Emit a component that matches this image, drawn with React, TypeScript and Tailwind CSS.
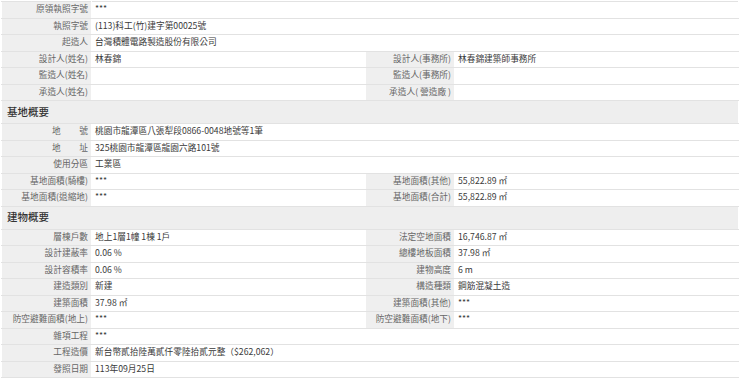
type Cell = { label: React.ReactNode; value?: React.ReactNode };
type Row = { left: Cell; right?: Cell } | { section: string };

const rows: Row[] = [
  { left: { label: "原領執照字號", value: "***" } },
  { left: { label: "執照字號", value: "(113)科工(竹)建字第00025號" } },
  { left: { label: "起造人", value: "台灣積體電路製造股份有限公司" } },
  { left: { label: "設計人(姓名)", value: "林春錦" }, right: { label: "設計人(事務所)", value: "林春錦建築師事務所" } },
  { left: { label: "監造人(姓名)" }, right: { label: "監造人(事務所)" } },
  { left: { label: "承造人(姓名)" }, right: { label: "承造人( 營造廠 )" } },
  { section: "基地概要" },
  {
    left: {
      label: (
        <span className="inline-flex w-[36px] justify-between">
          <span>地</span>
          <span>號</span>
        </span>
      ),
      value: "桃園市龍潭區八張犁段0866-0048地號等1筆",
    },
  },
  {
    left: {
      label: (
        <span className="inline-flex w-[36px] justify-between">
          <span>地</span>
          <span>址</span>
        </span>
      ),
      value: "325桃園市龍潭區龍園六路101號",
    },
  },
  { left: { label: "使用分區", value: "工業區" } },
  { left: { label: "基地面積(騎樓)", value: "***" }, right: { label: "基地面積(其他)", value: "55,822.89 ㎡" } },
  { left: { label: "基地面積(退縮地)", value: "***" }, right: { label: "基地面積(合計)", value: "55,822.89 ㎡" } },
  { section: "建物概要" },
  { left: { label: "層棟戶數", value: "地上1層1幢 1棟 1戶" }, right: { label: "法定空地面積", value: "16,746.87 ㎡" } },
  { left: { label: "設計建蔽率", value: "0.06 %" }, right: { label: "總樓地板面積", value: "37.98 ㎡" } },
  { left: { label: "設計容積率", value: "0.06 %" }, right: { label: "建物高度", value: "6 m" } },
  { left: { label: "建造類別", value: "新建" }, right: { label: "構造種類", value: "鋼筋混凝土造" } },
  { left: { label: "建築面積", value: "37.98 ㎡" }, right: { label: "建築面積(其他)", value: "***" } },
  { left: { label: "防空避難面積(地上)", value: "***" }, right: { label: "防空避難面積(地下)", value: "***" } },
  { left: { label: "雜項工程", value: "***" } },
  { left: { label: "工程造價", value: "新台幣貳拾陸萬貳仟零陸拾貳元整（$262,062）" } },
  { left: { label: "發照日期", value: "113年09月25日" } },
];

// horizontal rules only; vertical edges stay white like the original page
const labelCls =
  "h-[16.5px] border-y border-x border-y-[#e2e2e2] border-x-white bg-[#efefef] pr-[3px] text-right align-middle whitespace-nowrap text-[#666]";
const valueCls =
  "h-[16.5px] border-y border-x border-y-[#e2e2e2] border-x-white bg-white pl-[3px] text-left align-middle whitespace-nowrap text-[#3a3a3a]";

export default function App() {
  return (
    <div
      className="min-h-[381px] w-[740px] bg-white pt-[1px] pl-[1px]"
      style={{ fontFamily: '"Noto Sans CJK TC", "Noto Sans", sans-serif' }}
    >
      <table className="w-[738px] table-fixed border-collapse text-[8.7px] leading-none">
        <colgroup>
          <col className="w-[90px]" />
          <col className="w-[274px]" />
          <col className="w-[89px]" />
          <col />
        </colgroup>
        <tbody>
          {rows.map((row, i) => {
            if ("section" in row) {
              return (
                <tr key={i}>
                  <td
                    colSpan={4}
                    className="h-[23px] border-y border-x border-y-[#e2e2e2] border-x-white bg-[#eeeeee] pl-[5px] align-middle text-[10.5px] font-medium text-[#333]"
                  >
                    {row.section}
                  </td>
                </tr>
              );
            }
            return (
              <tr key={i}>
                <td className={labelCls}>{row.left.label}</td>
                {row.right ? (
                  <>
                    <td className={valueCls}>{row.left.value}</td>
                    <td className={labelCls}>{row.right.label}</td>
                    <td className={valueCls}>{row.right.value}</td>
                  </>
                ) : (
                  <td colSpan={3} className={valueCls}>
                    {row.left.value}
                  </td>
                )}
              </tr>
            );
          })}
        </tbody>
      </table>
    </div>
  );
}
